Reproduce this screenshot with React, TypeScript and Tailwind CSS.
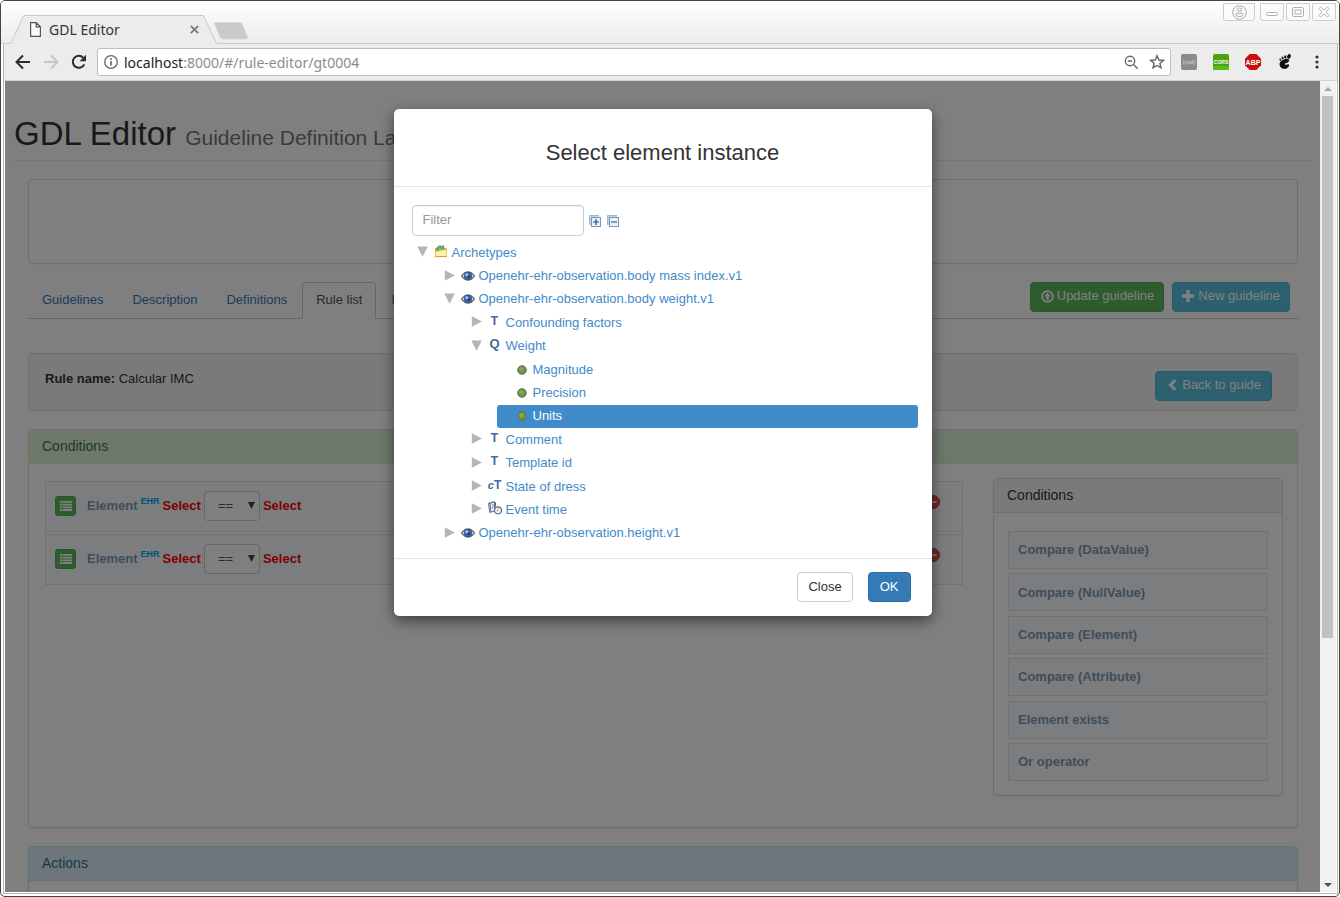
import React from "react";

type IconKind = "folder" | "eye" | "text" | "quantity" | "dot" | "coded" | "event";

interface TreeNode {
  label: string;
  level: 0 | 1 | 2 | 3;
  icon: IconKind;
  state: "open" | "closed" | "leaf";
  selected?: boolean;
}

const nodes: TreeNode[] = [
  { label: "Archetypes", level: 0, icon: "folder", state: "open" },
  { label: "Openehr-ehr-observation.body mass index.v1", level: 1, icon: "eye", state: "closed" },
  { label: "Openehr-ehr-observation.body weight.v1", level: 1, icon: "eye", state: "open" },
  { label: "Confounding factors", level: 2, icon: "text", state: "closed" },
  { label: "Weight", level: 2, icon: "quantity", state: "open" },
  { label: "Magnitude", level: 3, icon: "dot", state: "leaf" },
  { label: "Precision", level: 3, icon: "dot", state: "leaf" },
  { label: "Units", level: 3, icon: "dot", state: "leaf", selected: true },
  { label: "Comment", level: 2, icon: "text", state: "closed" },
  { label: "Template id", level: 2, icon: "text", state: "closed" },
  { label: "State of dress", level: 2, icon: "coded", state: "closed" },
  { label: "Event time", level: 2, icon: "event", state: "closed" },
  { label: "Openehr-ehr-observation.height.v1", level: 1, icon: "eye", state: "closed" },
];

const indents = ["ml-0", "ml-[27px]", "ml-[54px]", "ml-[81px]"];

const palette = [
  "Compare (DataValue)",
  "Compare (NullValue)",
  "Compare (Element)",
  "Compare (Attribute)",
  "Element exists",
  "Or operator",
];

function NodeIcon({ kind }: { kind: IconKind }) {
  switch (kind) {
    case "folder":
      return (
        <svg width="14" height="14" viewBox="0 0 14 14" className="-mt-1 overflow-visible">
          <path d="M1.500 4.500h3l1-1.500h4l1 1.500h2v8h-11z" fill="#f0c65c" stroke="#dba63c" strokeWidth=".9" />
          <path d="M2.500 6.500C2 3 5 .6 8 2.400L9.500 1.200 10 5.500 6.500 5.300 7.300 4.200C5.800 3.600 4.800 4.500 4.800 6.500z" fill="#5fae70" stroke="#3f8d58" strokeWidth=".5" />
          <path d="M1.800 7.500h4.500l1-1h5.200v6H1.800z" fill="#fdf0a8" />
          <path d="M1.500 12.600h11.300" stroke="#d59c2c" strokeWidth="1" />
        </svg>
      );
    case "eye":
      return (
        <svg width="14" height="10" viewBox="0 0 14 10" className="overflow-visible">
          <path d="M.6 5Q3.500 1 7 1T13.400 5Q10.500 9 7 9T.6 5z" fill="#dfe3ea" stroke="#66738c" strokeWidth="1.300" />
          <circle cx="7" cy="5" r="3.800" fill="#3f6bad" stroke="#2f4a7c" strokeWidth=".8" />
          <circle cx="7.600" cy="5.400" r="1.500" fill="#22406f" />
          <circle cx="5.800" cy="3.800" r="1.500" fill="#a5c6ee" />
        </svg>
      );
    case "text":
      return <span className="-mt-1 text-[12px] font-bold leading-4 text-[#46669c]">T</span>;
    case "quantity":
      return <span className="-mt-1 text-[13px] font-bold leading-4 text-[#46669c]">Q</span>;
    case "coded":
      return (
        <span className="-mt-1 text-[12px] font-bold leading-4 text-[#46669c]">
          <i className="text-[11px]">c</i>T
        </span>
      );
    case "event":
      return (
        <svg width="14" height="14" viewBox="0 0 14 14" className="-mt-1 shrink-0 overflow-visible" fill="none" stroke="#5b6b8c" strokeWidth="1">
          <path d="M.5 2.500L6.500 1v9L1.800 11.500z" fill="#f4f6fa" />
          <path d="M.5 2.500L2 1.800 3 10.800M3.500.9L7.500 1.500V5.500" />
          <path d="M4.200 3.500h1v2.300h-.8v2" stroke="#8d98b0" />
          <circle cx="10" cy="9.300" r="3.500" fill="#f4f6fa" strokeWidth="1.200" />
          <path d="M10 7.200v2.300l-1.300.8" stroke="#b09a90" />
        </svg>
      );
    default:
      return (
        <svg width="10" height="10" viewBox="0 0 10 10">
          <circle cx="5" cy="5" r="4.300" fill="#6f9440" stroke="#5f7060" strokeWidth="1" />
          <circle cx="4.300" cy="4.300" r="2" fill="#86a955" />
        </svg>
      );
  }
}

function Toggle({ state }: { state: TreeNode["state"] }) {
  if (state === "leaf") return <span className="w-[18px] shrink-0" />;
  return (
    <button
      type="button"
      aria-label={state === "open" ? "Collapse" : "Expand"}
      className="flex w-[18px] shrink-0 pb-[2px] pl-px"
    >
      <svg width="11" height="11" viewBox="0 0 11 11" fill="#b5b5b5">
        {state === "open" ? <path d="M.3.500h10.500L5.500 10.800z" /> : <path d="M.8.300v10.400L10.900 5.500z" />}
      </svg>
    </button>
  );
}

function ElementPicker() {
  return (
    <section
      role="dialog"
      aria-labelledby="dialog-title"
      className="w-[538px] rounded-[5px] bg-white p-px text-[#333] shadow-[0_5px_14px_rgba(0,0,0,0.5)]"
    >
      <header className="-mx-px border-b border-[#e5e5e5] pt-[28px] pb-[18px]">
        <h2 id="dialog-title" className="text-center text-[22px] leading-[30px]">
          Select element instance
        </h2>
      </header>
      <div className="pt-[18px] pr-[13px] pb-[13px] pl-[17px]">
        <div className="flex items-center">
          <input
            type="text"
            aria-label="Filter"
            placeholder="Filter"
            className="h-[31px] w-[172px] rounded-[4px] border border-[#ccc] px-[10px] pb-0.5 text-[13px] shadow-[inset_0_1px_1px_rgba(0,0,0,0.075)] outline-none placeholder:text-[#999]"
          />
          <button type="button" aria-label="Expand all" className="ml-[5px]">
            <svg width="12" height="12" viewBox="0 0 12 12">
              <path d="M.5 10V.5H10" fill="none" stroke="#9db8cf" />
              <rect x="1" y="1" width="9" height="9" fill="#bfd3e3" />
              <rect x="2.500" y="2.500" width="9" height="9" fill="#e6f1fa" stroke="#7e95b4" />
              <path d="M7 4v6M4 7h6" stroke="#214a86" strokeWidth="1.200" />
            </svg>
          </button>
          <button type="button" aria-label="Collapse all" className="ml-[6px]">
            <svg width="12" height="12" viewBox="0 0 12 12">
              <path d="M.5 10V.5H10" fill="none" stroke="#9db8cf" />
              <rect x="1" y="1" width="9" height="9" fill="#bfd3e3" />
              <rect x="2.500" y="2.500" width="9" height="9" fill="#e6f1fa" stroke="#7e95b4" />
              <path d="M4 7h6" stroke="#214a86" strokeWidth="1.200" />
            </svg>
          </button>
        </div>
        <ul role="tree" className="mt-[5px] ml-1 flex h-[304px] flex-col">
          {nodes.map((n) => (
            <li
              key={n.label}
              role="treeitem"
              aria-selected={!!n.selected}
              className={`flex min-h-0 flex-1 items-center rounded-[3px] ${indents[n.level]} ${n.selected ? "bg-[#428bca] text-white" : "text-[#428bca]"}`}
            >
              <Toggle state={n.state} />
              <span className="mr-1 flex w-[14px] shrink-0 justify-center">
                <NodeIcon kind={n.icon} />
              </span>
              <a href="#node" className="text-[13px] leading-[18px] whitespace-nowrap">
                {n.label}
              </a>
            </li>
          ))}
        </ul>
      </div>
      <footer className="-mx-px flex justify-end gap-[15px] border-t border-[#e5e5e5] pt-[13px] pr-[21px] pb-[13px]">
        <button type="button" className="h-[30px] rounded-[4px] border border-[#ccc] bg-white px-[10px] text-[13px]">
          Close
        </button>
        <button type="button" className="h-[30px] rounded-[4px] border border-[#2e6da4] bg-[#337ab7] px-[11px] text-[13px] text-white">
          OK
        </button>
      </footer>
    </section>
  );
}

function ConditionRow() {
  return (
    <div className="flex h-[51px] items-center border border-[#dfe3ee] bg-[#f9faff] pr-[22px] pb-px pl-[9px] text-[13px] font-bold">
      <button
        type="button"
        aria-label="Edit condition"
        className="mr-[11px] flex h-5 w-[21px] items-center justify-center rounded-[3px] border border-[#4cae4c] bg-[#5cb85c]"
      >
        <svg width="12" height="10" viewBox="0 0 12 10" fill="#fff">
          <path d="M0 0h2v1.800H0zM2.500 0H12v1.800H2.500zM0 2.700h2v1.800H0zM2.500 2.700H12v1.800H2.500zM0 5.400h2v1.800H0zM2.500 5.400H12v1.800H2.500zM0 8.100h2v1.800H0zM2.500 8.100H12v1.800H2.500z" />
        </svg>
      </button>
      <span className="text-[#7d9cb4]">Element</span>
      <span className="mb-2 ml-[3px] text-[9px] text-[#00a8e6]">EHR</span>
      <a href="#left" className="ml-[3px] text-[#f00]">
        Select
      </a>
      <div className="relative mx-[3px]">
        <select
          aria-label="Operator"
          className="block h-[30px] w-[56px] appearance-none rounded-[4px] border border-[#ccc] bg-white pl-[13px] text-[13px] font-normal text-[#555]"
        >
          <option>==</option>
          <option>!=</option>
        </select>
        <svg width="7" height="7" viewBox="0 0 7 7" className="pointer-events-none absolute top-[11px] right-[5px]" fill="#444">
          <path d="M0 0h7L3.500 7z" />
        </svg>
      </div>
      <a href="#right" className="text-[#f00]">
        Select
      </a>
      <button type="button" aria-label="Remove condition" className="mb-2 ml-auto">
        <svg width="14" height="14" viewBox="0 0 14 14">
          <circle cx="7" cy="7" r="6.500" fill="#e0523f" stroke="#b93a2c" />
          <path d="M3.500 6.200h7v1.600h-7z" fill="#fff" />
        </svg>
      </button>
    </div>
  );
}

function EditorPage() {
  const action = "flex h-[30px] items-center rounded-[4px] border text-[13px] leading-[18px] text-white pb-[2px]";
  return (
    <div className="text-[13px] text-[#333]">
      <header className="mx-[9px] h-20 border-b border-[#eee] pt-[35px]">
        <h1 className="text-[33px] leading-9 whitespace-nowrap">
          GDL Editor <small className="text-[21px] text-[#777]">Guideline Definition Language</small>
        </h1>
      </header>
      <main className="mr-[22px] ml-[23px]">
        <div className="mt-[18px] h-[85px] rounded-[4px] border border-[#ddd] shadow-[0_1px_1px_rgba(0,0,0,0.05)]" />
        <nav className="mt-[18px] flex items-start justify-between border-b border-[#ccc]">
          <ul className="-mb-px flex gap-px text-[#337ab7]">
            {["Guidelines", "Description", "Definitions", "Rule list", "Preconditions"].map((t) => (
              <li key={t}>
                <a
                  href="#tab"
                  className={`block h-[37px] rounded-t-[4px] border px-[13px] pt-[8px] leading-[18px] ${
                    t === "Rule list" ? "border-[#ccc] border-b-white bg-white text-[#555]" : "border-transparent"
                  }`}
                >
                  {t}
                </a>
              </li>
            ))}
          </ul>
          <div className="mr-2 flex gap-2">
            <button type="button" className={`${action} border-[#4cae4c] bg-[#5cb85c] pr-[9px] pl-[10px]`}>
              <svg width="13" height="13" viewBox="0 0 13 13" className="mr-[3px]">
                <circle cx="6.500" cy="6.500" r="5.400" fill="none" stroke="#fff" strokeWidth="1.700" />
                <path d="M6.500 2.800l3.300 3.600H7.700V10H5.300V6.400H3.200z" fill="#fff" />
              </svg>
              Update guideline
            </button>
            <button type="button" className={`${action} border-[#46b8da] bg-[#5bc0de] px-[9px]`}>
              <svg width="12" height="12" viewBox="0 0 12 12" className="mr-1" fill="#fff">
                <path d="M4.300 0h3.400v4.300H12v3.400H7.700V12H4.300V7.700H0V4.300h4.300z" />
              </svg>
              New guideline
            </button>
          </div>
        </nav>
        <div className="mt-[34px] flex h-[58px] items-start justify-between rounded-[4px] border border-[#e3e3e3] bg-[#f5f5f5] px-[16px] pt-[16px] shadow-[inset_0_1px_1px_rgba(0,0,0,0.05)]">
          <p className="leading-[18px]">
            <b>Rule name:</b> Calcular IMC
          </p>
          <button type="button" className={`${action} mt-px mr-[9px] border-[#46b8da] bg-[#5bc0de] pr-[10px] pl-3`}>
            <svg width="9" height="12" viewBox="0 0 9 12" className="mr-[5px]" fill="#fff">
              <path d="M6.200 0l2.300 2.200L4.700 6l3.800 3.800L6.200 12 .2 6z" />
            </svg>
            Back to guide
          </button>
        </div>

        <section className="mt-[18px] rounded-[4px] border border-[#d6e9c6] shadow-[0_1px_1px_rgba(0,0,0,0.05)]">
          <h3 className="h-[34px] rounded-t-[3px] border-b border-[#d6e9c6] bg-[#dff0d8] px-[13px] pt-[7px] text-[14px] leading-[18px] text-[#3c763d]">
            Conditions
          </h3>
          <div className="flex items-start gap-[30px] pt-[14px] pr-[14px] pb-[31px] pl-4">
            <div className="flex flex-1 flex-col gap-[2px] pt-[3px]">
              <ConditionRow />
              <ConditionRow />
            </div>
            <aside className="w-[290px] rounded-[4px] border border-[#ddd] shadow-[0_1px_1px_rgba(0,0,0,0.05)]">
              <h3 className="h-[34px] rounded-t-[3px] border-b border-[#ddd] bg-[#f5f5f5] px-[13px] pt-[7px] text-[14px] leading-[18px]">
                Conditions
              </h3>
              <ul className="flex h-[282px] flex-col justify-between px-[14px] pt-[18px] pb-[14px]">
                {palette.map((p) => (
                  <li
                    key={p}
                    className="flex h-[38px] items-center border border-[#dfe3ee] bg-[#f9faff] px-[9px] text-[13px] font-bold text-[#7d9cb4]"
                  >
                    {p}
                  </li>
                ))}
              </ul>
            </aside>
          </div>
        </section>

        <section className="mt-[18px] rounded-[4px] border border-[#bce8f1]">
          <h3 className="h-[34px] rounded-t-[3px] border-b border-[#bce8f1] bg-[#d9edf7] px-[13px] pt-[7px] text-[14px] leading-[18px] text-[#31708f]">
            Actions
          </h3>
          <div className="h-20" />
        </section>
      </main>
    </div>
  );
}

function TitleBar() {
  const control = "flex h-[18px] items-center justify-center rounded-b-[3px] border border-[#ccc] bg-[#fbfbfb]";
  return (
    <div className="flex h-[43px] shrink-0 justify-between border-b border-[#ccc] bg-linear-to-b from-white to-[#ececec]">
      <div className="flex items-end">
        <div className="relative -mb-px ml-[10px] flex h-[29px] w-[206px] items-center pl-[19px] font-['Noto_Sans',sans-serif] text-[14px] text-[#333]">
          <svg width="206" height="29" viewBox="0 0 206 29" className="absolute top-0 left-0">
            <path d="M0 28.500L12 1.500Q12.500.5 14 .5H191Q192.500.5 193 1.500L205.500 28.500V29H0z" fill="#ececec" />
            <path d="M0 28.500L12 1.500Q12.500.5 14 .5H191Q192.500.5 193 1.500L205.500 28.500" fill="none" stroke="#c8c8c8" />
          </svg>
          <svg width="11" height="15" viewBox="0 0 11 15" className="relative" fill="#fafafa" stroke="#555" strokeWidth="1.200">
            <path d="M.6.6h5.600l4.200 4.200v9.600H.6zM6.200.6v4.200h4.200" />
          </svg>
          <span className="relative ml-2">GDL Editor</span>
          <button type="button" aria-label="Close tab" className="relative mr-[18px] ml-auto">
            <svg width="9" height="9" viewBox="0 0 9 9" stroke="#777" strokeWidth="1.700">
              <path d="M.8.8l7.400 7.400M8.200.8L.8 8.200" />
            </svg>
          </button>
        </div>
        <button type="button" aria-label="New tab" className="mb-[3px] -ml-[3px]">
          <svg width="34" height="18" viewBox="0 0 34 18">
            <path d="M1.500.5H26Q27.500.5 28 2l5.500 13q.5 2-1 2H9Q7 17 6.500 16L.7 2Q.2.7 1.500.5z" fill="#cacaca" stroke="#d6d6d6" />
          </svg>
        </button>
      </div>
      <div className="mt-[2px] mr-[3px] flex items-start gap-[2px]">
        <button type="button" aria-label="Profile" className={`${control} mr-[3px] w-8`}>
          <svg width="15" height="15" viewBox="0 0 15 15" fill="none" stroke="#a8a8a8">
            <circle cx="7.500" cy="7.500" r="6.800" />
            <circle cx="7.500" cy="4.800" r="1.900" />
            <path d="M3.800 9.800Q3.800 8 5.500 8l2 1 2-1q1.700 0 1.700 1.800 0 1.700-3.700 1.700t-3.700-1.700z" />
          </svg>
        </button>
        <button type="button" aria-label="Minimize" className={`${control} w-6`}>
          <svg width="12" height="10" viewBox="0 0 12 10" fill="#fff" stroke="#b0b0b0">
            <rect x=".5" y="5.500" width="11" height="3" rx="1" />
          </svg>
        </button>
        <button type="button" aria-label="Maximize" className={`${control} w-6`}>
          <svg width="12" height="10" viewBox="0 0 12 10" fill="#fff" stroke="#b0b0b0">
            <rect x=".5" y=".5" width="11" height="9" rx="1.500" />
            <rect x="3" y="3" width="6" height="4" />
          </svg>
        </button>
        <button type="button" aria-label="Close window" className={`${control} w-6`}>
          <svg width="12" height="12" viewBox="0 0 12 12" fill="#fff" stroke="#b0b0b0">
            <path d="M1 2.500L2.500 1 6 4 9.500 1 11 2.500 8 6l3 3.500L9.500 11 6 8l-3.500 3L1 9.500 4 6z" />
          </svg>
        </button>
      </div>
    </div>
  );
}

function Toolbar() {
  return (
    <div className="flex h-[37px] shrink-0 items-center border-b border-[#d4d4d4] bg-[#ececec] pl-[11px]">
      <button type="button" aria-label="Back">
        <svg width="16" height="16" viewBox="0 0 16 16" fill="none" stroke="#2d2d2d" strokeWidth="2">
          <path d="M15 8H2M8 1.500L1.500 8 8 14.500" />
        </svg>
      </button>
      <button type="button" aria-label="Forward" className="ml-3">
        <svg width="16" height="16" viewBox="0 0 16 16" fill="none" stroke="#c6c6c6" strokeWidth="2">
          <path d="M1 8h13M8 1.500L14.500 8 8 14.500" />
        </svg>
      </button>
      <button type="button" aria-label="Reload" className="ml-3">
        <svg width="16" height="16" viewBox="0 0 16 16">
          <path d="M13.300 10.300A6 6 0 1 1 12.300 3.800" fill="none" stroke="#2d2d2d" strokeWidth="2" />
          <path d="M15 .8v6.400H8.600z" fill="#2d2d2d" />
        </svg>
      </button>
      <div className="ml-[10px] flex h-[28px] flex-1 items-center rounded-[3px] border border-[#bdbdbd] bg-white pr-[5px] pl-[6px]">
        <svg width="14" height="14" viewBox="0 0 14 14" className="shrink-0">
          <circle cx="7" cy="7" r="6.300" fill="none" stroke="#666" strokeWidth="1.300" />
          <path d="M6.200 3.300h1.600v1.600H6.200zM6.200 6h1.600v4.600H6.200z" fill="#666" />
        </svg>
        <p className="ml-[6px] flex-1 font-['Noto_Sans',sans-serif] text-[14px] text-[#8c8c8c]">
          <span className="text-[#222]">localhost</span>:8000/#/rule-editor/gt0004
        </p>
        <button type="button" aria-label="Zoom">
          <svg width="15" height="15" viewBox="0 0 15 15" fill="none" stroke="#666" strokeWidth="1.400">
            <circle cx="6" cy="6" r="4.700" />
            <path d="M9.500 9.500l4.200 4.200M3.800 6h4.400" />
          </svg>
        </button>
        <button type="button" aria-label="Bookmark" className="ml-[10px]">
          <svg width="16" height="16" viewBox="0 0 16 16" fill="none" stroke="#666" strokeWidth="1.400">
            <path d="M8 1.800l1.800 4.200 4.600.4-3.500 3 1.100 4.500L8 11.500l-4 2.400 1.100-4.500-3.500-3L6.200 6z" />
          </svg>
        </button>
      </div>
      <div className="flex items-center gap-4 pr-[12px] pl-[10px]">
        <button type="button" className="flex h-4 w-4 items-center justify-center rounded-[2px] bg-[#8b8b8b] text-[6px] leading-none text-[#ddd]">
          (md)
        </button>
        <button type="button" aria-label="CORS">
          <svg width="16" height="16" viewBox="0 0 16 16" className="overflow-visible">
            <rect width="16" height="16" rx="2" fill="#4ca310" />
            <rect y="12" width="16" height="4" rx="2" fill="#58bd18" />
            <text x="8" y="10" textAnchor="middle" fill="#fff" className="font-['Liberation_Sans',sans-serif] text-[5px] font-bold">
              CORS
            </text>
          </svg>
        </button>
        <button type="button" aria-label="ABP">
          <svg width="16" height="16" viewBox="0 0 16 16">
            <path d="M4.700 0h6.600L16 4.700v6.600L11.300 16H4.700L0 11.300V4.700z" fill="#c70d0d" />
            <text x="8" y="11" textAnchor="middle" fill="#fff" className="font-['Liberation_Sans',sans-serif] text-[7px] font-bold">
              ABP
            </text>
          </svg>
        </button>
        <button type="button" aria-label="GNOME Shell integration">
          <svg width="16" height="16" viewBox="0 0 16 16" fill="#111">
            <path d="M11.500 5.200c1.800 1.300-.3 3.600-2.700 4-1.500.3-1.400 1.400-.3 1.600 1.300.3 2.500-1.200 3.300-.2.900 1.300-1 4.400-4.200 4.400-3.300 0-5.300-2.400-5-5.400.3-3.200 6.600-6.200 8.900-4.400z" />
            <ellipse cx="12" cy="2.400" rx="1.800" ry="2.400" transform="rotate(20 12 2.400)" />
            <ellipse cx="8.300" cy="2.900" rx="1.100" ry="1.700" />
            <ellipse cx="5.600" cy="4" rx="1" ry="1.400" transform="rotate(-15 5.600 4)" />
            <ellipse cx="3.300" cy="5.600" rx=".9" ry="1.200" transform="rotate(-25 3.300 5.600)" />
          </svg>
        </button>
        <button type="button" aria-label="Menu">
          <svg width="16" height="14" viewBox="0 0 16 14" fill="#333">
            <circle cx="8" cy="2" r="1.600" />
            <circle cx="8" cy="7" r="1.600" />
            <circle cx="8" cy="12" r="1.600" />
          </svg>
        </button>
      </div>
    </div>
  );
}

export default function App() {
  return (
    <div className="flex h-screen flex-col overflow-hidden rounded-[5px] border border-[#444] bg-white font-['Liberation_Sans',Arial,sans-serif]">
      <TitleBar />
      <div className="mr-px mb-[2px] ml-[2px] flex min-h-0 flex-1 flex-col border-x border-b border-[#b4b4b4]">
        <Toolbar />
        <div className="flex min-h-0 flex-1 px-px pb-px">
          <div className="relative min-w-0 flex-1 overflow-hidden bg-white">
            <EditorPage />
            <div className="absolute inset-0 flex items-start justify-center bg-black/50 pt-[28px]">
              <ElementPicker />
            </div>
          </div>
          <div className="flex w-4 shrink-0 flex-col bg-[#f1f1f1] pr-[3px] pl-[2px]" aria-hidden="true">
            <svg width="11" height="15" viewBox="0 0 11 15" className="shrink-0" fill="#a3a3a3">
              <path d="M2 10h8L6 6z" />
            </svg>
            <div className="flex-[542] bg-[#c1c1c1]" />
            <div className="flex-[239]" />
            <svg width="11" height="15" viewBox="0 0 11 15" className="shrink-0" fill="#505050">
              <path d="M2 6h8l-4 4z" />
            </svg>
          </div>
        </div>
      </div>
    </div>
  );
}
